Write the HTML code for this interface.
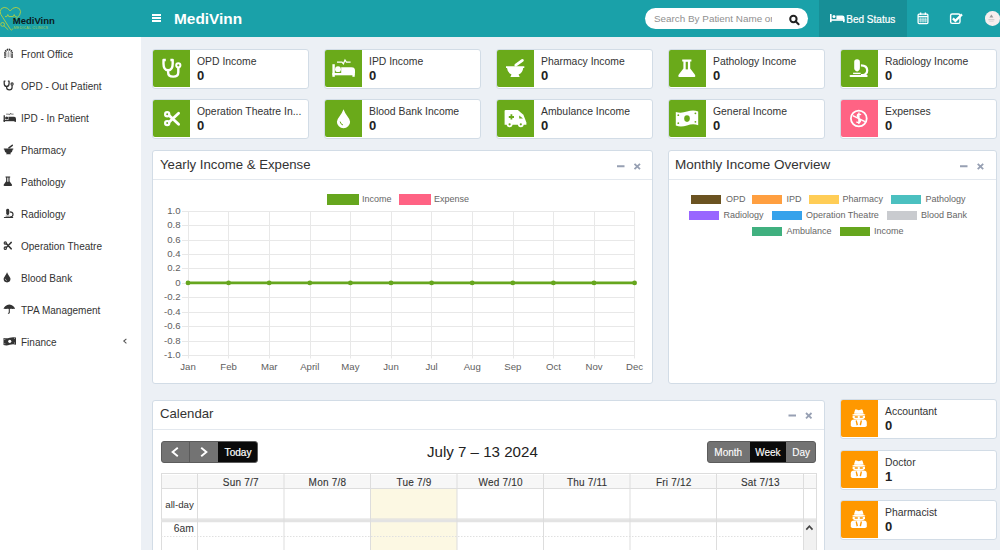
<!DOCTYPE html>
<html><head><meta charset="utf-8">
<style>
*{box-sizing:border-box;margin:0;padding:0}
html,body{width:1000px;height:550px;overflow:hidden}
body{font-family:"Liberation Sans",sans-serif;background:#ecf0f5;position:relative;color:#333}
.abs{position:absolute}
svg{position:absolute;overflow:visible}
#hdr{position:absolute;left:0;top:0;width:1000px;height:37px;background:#1aa1a9}
#side{position:absolute;left:0;top:37px;width:141px;height:513px;background:#fff}
.nav{position:absolute;left:21px;font-size:10px;color:#333;line-height:12px;white-space:nowrap}
.ib{position:absolute;width:156.5px;height:40px;background:#fff;border:1px solid #d2dce6;border-radius:3px}
.ib .ic{position:absolute;left:0;top:0;width:37px;height:37px;background:#6aaa1a;border-radius:2px 0 0 2px}
.ib .t{position:absolute;left:44px;top:6px;font-size:10.4px;color:#333;white-space:nowrap;line-height:12px}
.ib .v{position:absolute;left:44px;top:18px;font-size:13px;font-weight:bold;color:#222;line-height:15px}
.box{position:absolute;background:#fff;border:1px solid #d2dce6;border-radius:3px}
.box .bh{position:absolute;left:0;right:0;top:0;height:29px;border-bottom:1px solid #e3e8ee}
.box .bt{position:absolute;left:6px;top:6px;font-size:13.2px;color:#333;white-space:nowrap;line-height:16px}
.tool{position:absolute;color:#97a0b3;font-weight:bold}
.lg{position:absolute;font-size:9px;color:#666;white-space:nowrap;line-height:10px}
.sw{position:absolute;width:30px;height:9px}
</style></head><body>
<div id="hdr">
  <div class="abs" style="left:174px;top:10px;font-size:15.4px;font-weight:bold;color:#fff;line-height:17px">MediVinn</div>
  <div class="abs" style="left:152px;top:14px;width:9px;height:2px;background:#fff"></div>
  <div class="abs" style="left:152px;top:17px;width:9px;height:2px;background:#fff"></div>
  <div class="abs" style="left:152px;top:20px;width:9px;height:2px;background:#fff"></div>

  <div class="abs" style="left:819px;top:0;width:87.5px;height:37px;background:#178f97"></div>
  <!-- search -->
  <div class="abs" style="left:644.5px;top:8px;width:163px;height:21px;border-radius:11px;background:#fff"></div>
  <div class="abs" style="left:654px;top:12.6px;width:117.5px;overflow:hidden;font-size:9.9px;color:#8f8f8f;white-space:nowrap;line-height:12px">Search By Patient Name or</div>
  <!-- bed status -->
  <!-- logo -->
  <svg style="left:0;top:0" width="141" height="37" fill="none" stroke="#b5d040" stroke-width="0.9">
   <path d="M10.2 11Q7.6 7.2 4.2 7.4Q0.4 7.8 0.2 11.6Q0.2 14.4 2.6 17.2L10.6 29.6Q11.6 30.6 12.4 29.4L12.8 28.6"/>
   <path d="M10.2 11Q12.8 7.2 16.2 7.4Q20.4 7.8 20.6 11.6Q20.6 15.2 17 17.8L13.4 20.4"/>
   <path d="M5 16.6H6.8L7.8 14.6L8.8 16.6H13.2L14.2 14.6L15.2 16.6H16.6"/>
   <circle cx="2.6" cy="24.4" r="1.9"/>
   <path d="M4 25.8L8.2 29.8"/>
  </svg>
  <div class="abs" style="left:12.8px;top:16.4px;font-size:9.5px;font-weight:bold;color:#0b1a1c;line-height:10px">MediVinn</div>
  <div class="abs" style="left:13.5px;top:26px;font-size:3.6px;color:#a9cb4e;line-height:4px;letter-spacing:0.25px;white-space:nowrap">MEDICAL CLINICS</div>
  <!-- search icon -->
  <svg style="left:0;top:0" width="1000" height="37" fill="none" stroke="#222">
   <circle cx="793.4" cy="19" r="3.2" stroke-width="2"/>
   <path d="M795.6 21.3L798.6 24.2" stroke-width="2" stroke-linecap="round"/>
  </svg>
  <!-- bed icon -->
  <svg style="left:0;top:0" width="1000" height="37" fill="#fff">
   <rect x="830" y="14" width="1.6" height="8.2"/>
   <rect x="830" y="19.2" width="14.5" height="1.6"/>
   <rect x="843" y="19.2" width="1.6" height="3"/>
   <circle cx="834" cy="16.6" r="1.5"/>
   <path d="M836.4 15.4H842.4Q844.5 15.4 844.5 17.4V19.4H836.4Z"/>
  </svg>
  <!-- calendar + check icons -->
  <svg style="left:0;top:0" width="1000" height="37" fill="none" stroke="#fff">
   <rect x="918.1" y="14.2" width="9.8" height="9.4" rx="1" stroke-width="1.3"/>
   <path d="M918.1 16.6H927.9" stroke-width="1.4"/>
   <path d="M920.6 12.4V15M925.4 12.4V15" stroke-width="1.4"/>
   <path d="M920.3 17.6V22.6M922.1 17.6V22.6M923.9 17.6V22.6M925.7 17.6V22.6M918.6 19.2H927.4M918.6 21H927.4" stroke-width="0.6"/>
   <rect x="950.6" y="14" width="9.4" height="9.4" rx="1.6" stroke-width="1.4"/>
   <path d="M952.9 18.4L955.4 20.9L962 14.4" stroke-width="2.2"/>
  </svg>
  <!-- avatar -->
  <div class="abs" style="left:985px;top:11.3px;width:14.6px;height:14.6px;border-radius:50%;background:#f6eeee"></div>
  <svg style="left:0;top:0" width="1000" height="37" fill="#999">
   <path d="M989.4 17.6L991.4 14.4L993.4 17.6Z"/>
   <rect x="988.4" y="19.4" width="6" height="0.8" fill="#bbb"/>
   <rect x="989.2" y="21" width="4.4" height="0.5" fill="#ccc"/>
  </svg>

  <div class="abs" style="left:846.3px;top:14.3px;font-size:10px;color:#fff;white-space:nowrap;line-height:12px;-webkit-text-stroke:0.2px #fff">Bed Status</div>
</div>
<div id="side">
  <div class="nav" style="top:12.4px">Front Office</div>
  <div class="nav" style="top:44.4px">OPD - Out Patient</div>
  <div class="nav" style="top:76.4px">IPD - In Patient</div>
  <div class="nav" style="top:108.4px">Pharmacy</div>
  <div class="nav" style="top:140.4px">Pathology</div>
  <div class="nav" style="top:172.4px">Radiology</div>
  <div class="nav" style="top:204.4px">Operation Theatre</div>
  <div class="nav" style="top:236.4px">Blood Bank</div>
  <div class="nav" style="top:268.4px">TPA Management</div>
  <div class="nav" style="top:300.4px">Finance</div>
  <svg style="left:0;top:0" width="141" height="513"><path d="M126.4 301.8L123.8 304.1L126.4 306.4" stroke="#555" stroke-width="1.1" fill="none"/></svg>
</div>

<div class="ib" style="left:152px;top:49px"><div class="ic"></div><div class="t">OPD Income</div><div class="v">0</div></div>
<div class="ib" style="left:324px;top:49px"><div class="ic"></div><div class="t">IPD Income</div><div class="v">0</div></div>
<div class="ib" style="left:496px;top:49px"><div class="ic"></div><div class="t">Pharmacy Income</div><div class="v">0</div></div>
<div class="ib" style="left:668px;top:49px"><div class="ic"></div><div class="t">Pathology Income</div><div class="v">0</div></div>
<div class="ib" style="left:840px;top:49px"><div class="ic"></div><div class="t">Radiology Income</div><div class="v">0</div></div>
<div class="ib" style="left:152px;top:99px"><div class="ic"></div><div class="t">Operation Theatre In...</div><div class="v">0</div></div>
<div class="ib" style="left:324px;top:99px"><div class="ic"></div><div class="t">Blood Bank Income</div><div class="v">0</div></div>
<div class="ib" style="left:496px;top:99px"><div class="ic"></div><div class="t">Ambulance Income</div><div class="v">0</div></div>
<div class="ib" style="left:668px;top:99px"><div class="ic"></div><div class="t">General Income</div><div class="v">0</div></div>
<div class="ib" style="left:840px;top:99px"><div class="ic" style="background:#ff6384"></div><div class="t">Expenses</div><div class="v">0</div></div>


<!-- info box icons -->
<svg style="left:0;top:0" width="1000" height="550">
<g transform="translate(153,49)"><svg x="9.2" y="9.6" width="18.4" height="19.4" viewBox="9.2 9.6 18.4 19.4" preserveAspectRatio="none" style="position:static;overflow:visible;color:#fff;--k:#6aaa1a">
  <path d="M12.8 11H10.5V14.8Q10.5 21.2 15.1 21.2Q19.7 21.2 19.7 14.8V11H17.4" fill="none" stroke="currentColor" stroke-width="2.4" stroke-linejoin="round"/>
  <path d="M15.1 21V23.2Q15.1 27.6 20.2 27.6Q25.3 27.6 25.3 23.2V18.4" fill="none" stroke="currentColor" stroke-width="2.4"/>
  <circle cx="25.3" cy="16.3" r="2.1" fill="none" stroke="currentColor" stroke-width="2"/>
</svg></g>
<g transform="translate(324,49)"><svg x="8.4" y="10.4" width="22.6" height="17.4" viewBox="8.4 10.4 22.6 17.4" preserveAspectRatio="none" style="position:static;overflow:visible;color:#fff;--k:#6aaa1a">
  <rect x="8.4" y="15.2" width="2.4" height="12.6" fill="currentColor"/>
  <rect x="8.4" y="24" width="22.3" height="2.3" fill="currentColor"/>
  <rect x="28.4" y="24" width="2.3" height="3.8" fill="currentColor"/>
  <circle cx="14" cy="20.2" r="2.9" fill="currentColor"/>
  <path d="M17.2 18.2H27.5Q31 18.2 31 21.6V24H17.2Z" fill="currentColor"/>
  <path d="M13 13.1H18L19.4 14.8L21 11L22.4 13.1H26.6" stroke="currentColor" stroke-width="1.2" fill="none"/>
</svg></g>
<g transform="translate(496,49)"><svg x="10.0" y="10.0" width="18.3" height="18.0" viewBox="10 10 18.3 18" preserveAspectRatio="none" style="position:static;overflow:visible;color:#fff;--k:#6aaa1a">
  <path d="M10 17.2H28.3V19H27.2Q26.8 23.8 22.6 25.6L23.7 27.9H14.4L15.5 25.6Q11.4 23.8 11 19H10Z" fill="currentColor"/>
  <path d="M19.8 16.2L26.4 11.4" stroke="currentColor" stroke-width="2.8" stroke-linecap="round"/>
</svg></g>
<g transform="translate(668,49)"><svg x="10.8" y="10.6" width="16.6" height="17.4" viewBox="10.8 10.6 16.6 17.4" preserveAspectRatio="none" style="position:static;overflow:visible;color:#fff;--k:#6aaa1a">
  <path d="M14.2 10.6H23.4V12.4H22.2V19.4L26.8 25.4Q28.4 28 25.4 28H12.2Q9.2 28 10.8 25.4L15.4 19.4V12.4H14.2Z" fill="currentColor"/>
  <rect x="17.7" y="12.8" width="2.2" height="7.6" style="fill:var(--k)"/>
</svg></g>
<g transform="translate(840,49)"><svg x="9.6" y="10.3" width="18.7" height="17.7" viewBox="9.6 10.3 18.7 17.7" preserveAspectRatio="none" style="position:static;overflow:visible;color:#fff;--k:#6aaa1a">
  <rect x="14.2" y="10.3" width="5.7" height="11.6" rx="2.8" fill="currentColor"/>
  <path d="M14.6 20.5H19.5L17.05 22.7Z" fill="currentColor"/>
  <rect x="13.1" y="23.7" width="7.5" height="1.4" fill="currentColor"/>
  <rect x="9.6" y="26.1" width="18.1" height="1.9" rx="0.9" fill="currentColor"/>
  <path d="M20.9 16.4Q27.2 16.4 27.2 21.4Q27.2 26.1 21 26.1" stroke="currentColor" stroke-width="2.2" fill="none"/>
</svg></g>
<g transform="translate(153,99)"><svg x="11.0" y="11.9" width="16.0" height="15.4" viewBox="11 11.9 16 15.4" preserveAspectRatio="none" style="position:static;overflow:visible;color:#fff;--k:#6aaa1a">
  <circle cx="14.2" cy="15.2" r="2.1" fill="none" stroke="currentColor" stroke-width="2.2"/>
  <circle cx="14.2" cy="24.1" r="2.1" fill="none" stroke="currentColor" stroke-width="2.2"/>
  <path d="M16.2 23L25.6 14.2M16.2 16.4L25.6 25.2" stroke="currentColor" stroke-width="2.8" stroke-linecap="round"/>
</svg></g>
<g transform="translate(325,99)"><svg x="11.9" y="10.3" width="13.2" height="19.0" viewBox="11.9 10.3 13.2 19" preserveAspectRatio="none" style="position:static;overflow:visible;color:#fff;--k:#6aaa1a">
  <path d="M18.5 10.3Q19.6 13.5 22.4 17.2Q25.1 20.6 25.1 22.7A6.6 6.6 0 0 1 11.9 22.7Q11.9 20.6 14.6 17.2Q17.4 13.5 18.5 10.3Z" fill="currentColor"/>
  <path d="M15.2 22.6Q15.4 25.2 18 26" style="stroke:var(--k)" stroke-width="1" fill="none"/>
</svg></g>
<g transform="translate(497,99)"><svg x="7.6" y="10.9" width="21.8" height="17.3" viewBox="7.6 10.9 21.8 17.3" preserveAspectRatio="none" style="position:static;overflow:visible;color:#fff;--k:#6aaa1a">
  <path d="M7.6 12Q7.6 10.9 8.7 10.9H20.8L26.4 15.7L29.4 23.4V25.8H7.6Z" fill="currentColor"/>
  <circle cx="12.6" cy="25.3" r="2.9" fill="currentColor"/>
  <circle cx="23.8" cy="25.3" r="2.9" fill="currentColor"/>
  <circle cx="12.6" cy="25.3" r="1.1" style="fill:var(--k)"/>
  <circle cx="23.8" cy="25.3" r="1.1" style="fill:var(--k)"/>
  <path d="M14.4 15.3V20.6M11.8 18H17" style="stroke:var(--k)" stroke-width="1.8"/>
  <path d="M22.2 16.6L26 19.6H22.2Z" style="fill:var(--k)"/>
</svg></g>
<g transform="translate(669,99)"><svg x="6.8" y="11.0" width="22.4" height="17.6" viewBox="6.8 11 22.4 17.6" preserveAspectRatio="none" style="position:static;overflow:visible;color:#fff;--k:#6aaa1a">
  <path d="M6.8 13Q12 14.6 18 12.6Q24 10.4 29.2 12.4V26.2Q24 24.4 18 26.4Q12 28.6 6.8 26.6Z" fill="currentColor"/>
  <ellipse cx="18" cy="19.6" rx="2.8" ry="3.3" style="fill:var(--k)"/>
  <circle cx="9.3" cy="16.2" r="0.9" style="fill:var(--k)"/>
  <circle cx="26.4" cy="14.3" r="0.9" style="fill:var(--k)"/>
  <circle cx="9.3" cy="24.2" r="0.9" style="fill:var(--k)"/>
  <circle cx="26.4" cy="22.8" r="0.9" style="fill:var(--k)"/>
</svg></g>
<g transform="translate(841,99)"><svg x="9.0" y="10.7" width="17.6" height="17.6" viewBox="9 10.7 17.6 17.6" preserveAspectRatio="none" style="position:static;overflow:visible;color:#fff;--k:#ff6384">
  <circle cx="17.8" cy="19.5" r="7.9" fill="none" stroke="currentColor" stroke-width="1.8"/>
  <path d="M11.8 16.6L24 22.6" stroke="currentColor" stroke-width="1.6"/>
  <path d="M20 15.8Q18.9 14.8 17.6 15.2Q15.6 15.9 16.9 17.8L18.9 20.6Q20.2 22.7 18.1 23.5Q16.6 23.9 15.4 22.8M17.9 13.6V24.9" stroke="currentColor" stroke-width="1.4" fill="none"/>
</svg></g>
</svg>
<!-- side icons -->
<svg style="left:0;top:0" width="141" height="550">
<svg x="3.8" y="48.7" width="9.5" height="9.5" viewBox="0 0 10 10" preserveAspectRatio="none" style="position:static;overflow:visible;color:#333;--k:#fff">
  <path d="M1.3 9.6V4.6A3.7 3.7 0 0 1 8.7 4.6V9.6" fill="none" stroke="currentColor" stroke-width="2" stroke-dasharray="1.5 0.7"/>
  <path d="M5 2.6V9M3.3 3.8V9M6.7 3.8V9" stroke="currentColor" stroke-width="0.8" opacity="0.55"/>
</svg>
<svg x="3.5" y="80.5" width="9.8" height="10" viewBox="9.2 9.6 18.4 19.4" preserveAspectRatio="none" style="position:static;overflow:visible;color:#333;--k:#fff">
  <path d="M12.8 11H10.5V14.8Q10.5 21.2 15.1 21.2Q19.7 21.2 19.7 14.8V11H17.4" fill="none" stroke="currentColor" stroke-width="2.4" stroke-linejoin="round"/>
  <path d="M15.1 21V23.2Q15.1 27.6 20.2 27.6Q25.3 27.6 25.3 23.2V18.4" fill="none" stroke="currentColor" stroke-width="2.4"/>
  <circle cx="25.3" cy="16.3" r="2.1" fill="none" stroke="currentColor" stroke-width="2"/>
</svg>
<svg x="3.6" y="112.7" width="12.4" height="9.3" viewBox="8.4 10.4 22.6 17.4" preserveAspectRatio="none" style="position:static;overflow:visible;color:#333;--k:#fff">
  <rect x="8.4" y="15.2" width="2.4" height="12.6" fill="currentColor"/>
  <rect x="8.4" y="24" width="22.3" height="2.3" fill="currentColor"/>
  <rect x="28.4" y="24" width="2.3" height="3.8" fill="currentColor"/>
  <circle cx="14" cy="20.2" r="2.9" fill="currentColor"/>
  <path d="M17.2 18.2H27.5Q31 18.2 31 21.6V24H17.2Z" fill="currentColor"/>
  <path d="M13 13.1H18L19.4 14.8L21 11L22.4 13.1H26.6" stroke="currentColor" stroke-width="1.2" fill="none"/>
</svg>
<svg x="3.8" y="144.5" width="9.5" height="9.9" viewBox="10 10 18.3 18" preserveAspectRatio="none" style="position:static;overflow:visible;color:#333;--k:#fff">
  <path d="M10 17.2H28.3V19H27.2Q26.8 23.8 22.6 25.6L23.7 27.9H14.4L15.5 25.6Q11.4 23.8 11 19H10Z" fill="currentColor"/>
  <path d="M19.8 16.2L26.4 11.4" stroke="currentColor" stroke-width="2.8" stroke-linecap="round"/>
</svg>
<svg x="3.8" y="176.4" width="8.4" height="9.6" viewBox="10.8 10.6 16.6 17.4" preserveAspectRatio="none" style="position:static;overflow:visible;color:#333;--k:#fff">
  <path d="M14.2 10.6H23.4V12.4H22.2V19.4L26.8 25.4Q28.4 28 25.4 28H12.2Q9.2 28 10.8 25.4L15.4 19.4V12.4H14.2Z" fill="currentColor"/>
  <rect x="17.7" y="12.8" width="2.2" height="7.6" style="fill:var(--k)"/>
</svg>
<svg x="3.8" y="208.7" width="9.8" height="9.3" viewBox="9.6 10.3 18.7 17.7" preserveAspectRatio="none" style="position:static;overflow:visible;color:#333;--k:#fff">
  <rect x="14.2" y="10.3" width="5.7" height="11.6" rx="2.8" fill="currentColor"/>
  <path d="M14.6 20.5H19.5L17.05 22.7Z" fill="currentColor"/>
  <rect x="13.1" y="23.7" width="7.5" height="1.4" fill="currentColor"/>
  <rect x="9.6" y="26.1" width="18.1" height="1.9" rx="0.9" fill="currentColor"/>
  <path d="M20.9 16.4Q27.2 16.4 27.2 21.4Q27.2 26.1 21 26.1" stroke="currentColor" stroke-width="2.2" fill="none"/>
</svg>
<svg x="3.6" y="241.1" width="8.4" height="8.9" viewBox="11 11.9 16 15.4" preserveAspectRatio="none" style="position:static;overflow:visible;color:#333;--k:#fff">
  <circle cx="14.2" cy="15.2" r="2.1" fill="none" stroke="currentColor" stroke-width="2.2"/>
  <circle cx="14.2" cy="24.1" r="2.1" fill="none" stroke="currentColor" stroke-width="2.2"/>
  <path d="M16.2 23L25.6 14.2M16.2 16.4L25.6 25.2" stroke="currentColor" stroke-width="2.8" stroke-linecap="round"/>
</svg>
<svg x="3.6" y="272.2" width="6.9" height="10.2" viewBox="11.9 10.3 13.2 19" preserveAspectRatio="none" style="position:static;overflow:visible;color:#333;--k:#fff">
  <path d="M18.5 10.3Q19.6 13.5 22.4 17.2Q25.1 20.6 25.1 22.7A6.6 6.6 0 0 1 11.9 22.7Q11.9 20.6 14.6 17.2Q17.4 13.5 18.5 10.3Z" fill="currentColor"/>
  <path d="M15.2 22.6Q15.4 25.2 18 26" style="stroke:var(--k)" stroke-width="1" fill="none"/>
</svg>
<svg x="3.5" y="304.2" width="11.6" height="9.8" viewBox="0 0 12 10" preserveAspectRatio="none" style="position:static;overflow:visible;color:#333;--k:#fff">
  <path d="M0 5Q1.2 1.2 6 0.4Q10.8 1.2 12 5Q10.8 4.4 9.6 5Q8.4 4.2 6 4.8Q3.6 4.2 2.4 5Q1.2 4.4 0 5Z" fill="currentColor"/>
  <path d="M6 4.6V8.4Q6 9.4 4.6 9.2" stroke="currentColor" stroke-width="1.1" fill="none"/>
</svg>
<svg x="3.5" y="336.9" width="12.5" height="9.1" viewBox="6.8 11 22.4 17.6" preserveAspectRatio="none" style="position:static;overflow:visible;color:#333;--k:#fff">
  <path d="M6.8 13Q12 14.6 18 12.6Q24 10.4 29.2 12.4V26.2Q24 24.4 18 26.4Q12 28.6 6.8 26.6Z" fill="currentColor"/>
  <ellipse cx="18" cy="19.6" rx="2.8" ry="3.3" style="fill:var(--k)"/>
  <circle cx="9.3" cy="16.2" r="0.9" style="fill:var(--k)"/>
  <circle cx="26.4" cy="14.3" r="0.9" style="fill:var(--k)"/>
  <circle cx="9.3" cy="24.2" r="0.9" style="fill:var(--k)"/>
  <circle cx="26.4" cy="22.8" r="0.9" style="fill:var(--k)"/>
</svg>
</svg>
<!-- Yearly chart box -->
<div class="box" style="left:152px;top:150px;width:501px;height:234px"><div class="bh"><div class="bt" style="left:7px">Yearly Income &amp; Expense</div></div></div>
<div class="sw" style="left:327px;top:194px;width:32px;height:10.5px;background:#66a61e"></div>
<div class="lg" style="left:362px;top:194px">Income</div>
<div class="sw" style="left:399px;top:194px;width:32px;height:10.5px;background:#ff6384"></div>
<div class="lg" style="left:434px;top:194px">Expense</div>

<!--CHART-->
<svg style="left:0;top:0" width="1000" height="550" viewBox="0 0 1000 550">
<path d="M182 211.5H634.6M182 225.5H634.6M182 240.5H634.6M182 254.5H634.6M182 268.5H634.6M182 283.5H634.6M182 297.5H634.6M182 312.5H634.6M182 326.5H634.6M182 341.5H634.6M182 355.5H634.6M188.5 211.5V358.5M228.5 211.5V358.5M269.5 211.5V358.5M310.5 211.5V358.5M350.5 211.5V358.5M391.5 211.5V358.5M431.5 211.5V358.5M472.5 211.5V358.5M513.5 211.5V358.5M553.5 211.5V358.5M594.5 211.5V358.5M634.5 211.5V358.5" stroke="#e8e8e8" stroke-width="1" fill="none"/>
<text x="180.5" y="213.6" text-anchor="end" font-size="9.6" fill="#606060" font-family="Liberation Sans">1.0</text>
<text x="180.5" y="228.1" text-anchor="end" font-size="9.6" fill="#606060" font-family="Liberation Sans">0.8</text>
<text x="180.5" y="242.5" text-anchor="end" font-size="9.6" fill="#606060" font-family="Liberation Sans">0.6</text>
<text x="180.5" y="257.0" text-anchor="end" font-size="9.6" fill="#606060" font-family="Liberation Sans">0.4</text>
<text x="180.5" y="271.4" text-anchor="end" font-size="9.6" fill="#606060" font-family="Liberation Sans">0.2</text>
<text x="180.5" y="285.9" text-anchor="end" font-size="9.6" fill="#606060" font-family="Liberation Sans">0</text>
<text x="180.5" y="300.4" text-anchor="end" font-size="9.6" fill="#606060" font-family="Liberation Sans">-0.2</text>
<text x="180.5" y="314.8" text-anchor="end" font-size="9.6" fill="#606060" font-family="Liberation Sans">-0.4</text>
<text x="180.5" y="329.3" text-anchor="end" font-size="9.6" fill="#606060" font-family="Liberation Sans">-0.6</text>
<text x="180.5" y="343.7" text-anchor="end" font-size="9.6" fill="#606060" font-family="Liberation Sans">-0.8</text>
<text x="180.5" y="358.2" text-anchor="end" font-size="9.6" fill="#606060" font-family="Liberation Sans">-1.0</text>
<text x="188.0" y="370" text-anchor="middle" font-size="9.6" fill="#606060" font-family="Liberation Sans">Jan</text>
<text x="228.6" y="370" text-anchor="middle" font-size="9.6" fill="#606060" font-family="Liberation Sans">Feb</text>
<text x="269.2" y="370" text-anchor="middle" font-size="9.6" fill="#606060" font-family="Liberation Sans">Mar</text>
<text x="309.8" y="370" text-anchor="middle" font-size="9.6" fill="#606060" font-family="Liberation Sans">April</text>
<text x="350.4" y="370" text-anchor="middle" font-size="9.6" fill="#606060" font-family="Liberation Sans">May</text>
<text x="391.0" y="370" text-anchor="middle" font-size="9.6" fill="#606060" font-family="Liberation Sans">Jun</text>
<text x="431.6" y="370" text-anchor="middle" font-size="9.6" fill="#606060" font-family="Liberation Sans">Jul</text>
<text x="472.2" y="370" text-anchor="middle" font-size="9.6" fill="#606060" font-family="Liberation Sans">Aug</text>
<text x="512.8" y="370" text-anchor="middle" font-size="9.6" fill="#606060" font-family="Liberation Sans">Sep</text>
<text x="553.4" y="370" text-anchor="middle" font-size="9.6" fill="#606060" font-family="Liberation Sans">Oct</text>
<text x="594.0" y="370" text-anchor="middle" font-size="9.6" fill="#606060" font-family="Liberation Sans">Nov</text>
<text x="634.6" y="370" text-anchor="middle" font-size="9.6" fill="#606060" font-family="Liberation Sans">Dec</text>
<path d="M188.0 282.9H634.6" stroke="#ff6384" stroke-width="1" fill="none"/>
<path d="M188.0 282.9H634.6" stroke="#66a61e" stroke-width="2.6" fill="none"/>
<circle cx="188.0" cy="282.9" r="2.4" fill="#66a61e"/>
<circle cx="228.6" cy="282.9" r="2.4" fill="#66a61e"/>
<circle cx="269.2" cy="282.9" r="2.4" fill="#66a61e"/>
<circle cx="309.8" cy="282.9" r="2.4" fill="#66a61e"/>
<circle cx="350.4" cy="282.9" r="2.4" fill="#66a61e"/>
<circle cx="391.0" cy="282.9" r="2.4" fill="#66a61e"/>
<circle cx="431.6" cy="282.9" r="2.4" fill="#66a61e"/>
<circle cx="472.2" cy="282.9" r="2.4" fill="#66a61e"/>
<circle cx="512.8" cy="282.9" r="2.4" fill="#66a61e"/>
<circle cx="553.4" cy="282.9" r="2.4" fill="#66a61e"/>
<circle cx="594.0" cy="282.9" r="2.4" fill="#66a61e"/>
<circle cx="634.6" cy="282.9" r="2.4" fill="#66a61e"/>
</svg>
<!-- Monthly box -->
<div class="box" style="left:668px;top:150px;width:328.5px;height:234px"><div class="bh"><div class="bt" style="font-size:13.5px;left:6px">Monthly Income Overview</div></div></div>
<div class="sw" style="left:691px;top:195px;background:#6b5321"></div><div class="lg" style="left:726px;top:194px">OPD</div>
<div class="sw" style="left:752px;top:195px;background:#ff9f40"></div><div class="lg" style="left:786.5px;top:194px">IPD</div>
<div class="sw" style="left:808.5px;top:195px;background:#ffcd56"></div><div class="lg" style="left:842.5px;top:194px">Pharmacy</div>
<div class="sw" style="left:891px;top:195px;background:#4bc0c0"></div><div class="lg" style="left:925.5px;top:194px">Pathology</div>
<div class="sw" style="left:689px;top:211px;background:#9966ff"></div><div class="lg" style="left:723.5px;top:210px">Radiology</div>
<div class="sw" style="left:771.5px;top:211px;background:#36a2eb"></div><div class="lg" style="left:806px;top:210px">Operation Theatre</div>
<div class="sw" style="left:887px;top:211px;background:#c9cbcf"></div><div class="lg" style="left:921px;top:210px">Blood Bank</div>
<div class="sw" style="left:752px;top:227px;background:#40b07f"></div><div class="lg" style="left:786.5px;top:226px">Ambulance</div>
<div class="sw" style="left:840px;top:227px;background:#66a61e"></div><div class="lg" style="left:874px;top:226px">Income</div>

<!-- Calendar box -->
<div class="box" style="left:152px;top:400px;width:672.5px;height:170px"><div class="bh"><div class="bt" style="top:5px;left:7px">Calendar</div></div></div>


<!-- calendar content -->
<div class="abs" style="left:160.5px;top:440.6px;width:97px;height:22.2px;border-radius:3px;background:#737373;border:1px solid #5c5c5c;overflow:hidden">
  <div class="abs" style="left:27px;top:0;width:1.5px;height:20px;background:#5a5a5a"></div>
  <div class="abs" style="left:56.8px;top:-1px;width:40px;height:22px;background:#0a0a0a"></div>
</div>
<svg style="left:0;top:0" width="1000" height="550"><path d="M177.8 447.8L172.6 452L177.8 456.3M201.2 447.8L206.4 452L201.2 456.3" stroke="#fff" stroke-width="1.9" fill="none"/></svg>
<div class="abs" style="left:224.6px;top:446.6px;font-size:10.1px;color:#fff;line-height:12px;-webkit-text-stroke:0.2px #fff">Today</div>
<div class="abs" style="left:427px;top:443px;font-size:15.1px;color:#222;line-height:17px;white-space:nowrap">July 7 &#8211; 13 2024</div>
<div class="abs" style="left:707.4px;top:440.7px;width:108.7px;height:22.2px;border-radius:3px;background:#737373;border:1px solid #5c5c5c;overflow:hidden">
  <div class="abs" style="left:41.6px;top:-1px;width:36.1px;height:22px;background:#0a0a0a"></div>
</div>
<div class="abs" style="left:714.3px;top:447.2px;font-size:10px;color:#fff;line-height:12px;-webkit-text-stroke:0.12px #fff">Month</div>
<div class="abs" style="left:755.2px;top:447.2px;font-size:10px;color:#fff;line-height:12px;-webkit-text-stroke:0.12px #fff">Week</div>
<div class="abs" style="left:792.2px;top:447.2px;font-size:10px;color:#fff;line-height:12px;-webkit-text-stroke:0.12px #fff">Day</div>
<!-- grid -->
<div class="abs" style="left:160.5px;top:473px;width:656px;height:80px;border:1px solid #ddd;border-bottom:none;background:#fff"></div>
<div class="abs" style="left:161.5px;top:474.5px;width:654px;height:14px;background:#f7f7f7"></div>
<div class="abs" style="left:370.6px;top:488.5px;width:86px;height:62px;background:#fcf8e3"></div>
<div class="abs" style="left:803.3px;top:521.5px;width:12.8px;height:30px;background:#f1f1f1"></div>
<svg style="left:0;top:0" width="1000" height="550">
<path d="M161 488.5H816M161 519H816" stroke="#ddd" stroke-width="1" fill="none"/><path d="M161 536.5H803" stroke="#e0e0e0" stroke-width="1" stroke-dasharray="1.5 1.5" fill="none"/>
<path d="M161 520.8H816" stroke="#e3e3e3" stroke-width="3" fill="none"/>
<path d="M197.5 474V550M284 474V550M370.5 474V550M457 474V550M543.5 474V550M630 474V550M716.5 474V550M803.5 474V550" stroke="#ddd" stroke-width="1" fill="none"/>
<path d="M806.3 529.6L809.4 526.2L812.5 529.6" stroke="#444" stroke-width="1.6" fill="none"/>
</svg>
<div class="abs" style="left:197.5px;top:476.5px;width:86.6px;text-align:center;font-size:10px;letter-spacing:0.2px;color:#333;line-height:12px;-webkit-text-stroke:0.1px #333">Sun 7/7</div>
<div class="abs" style="left:284.1px;top:476.5px;width:86.6px;text-align:center;font-size:10px;letter-spacing:0.2px;color:#333;line-height:12px;-webkit-text-stroke:0.1px #333">Mon 7/8</div>
<div class="abs" style="left:370.7px;top:476.5px;width:86.6px;text-align:center;font-size:10px;letter-spacing:0.2px;color:#333;line-height:12px;-webkit-text-stroke:0.1px #333">Tue 7/9</div>
<div class="abs" style="left:457.3px;top:476.5px;width:86.6px;text-align:center;font-size:10px;letter-spacing:0.2px;color:#333;line-height:12px;-webkit-text-stroke:0.1px #333">Wed 7/10</div>
<div class="abs" style="left:543.9px;top:476.5px;width:86.6px;text-align:center;font-size:10px;letter-spacing:0.2px;color:#333;line-height:12px;-webkit-text-stroke:0.1px #333">Thu 7/11</div>
<div class="abs" style="left:630.5px;top:476.5px;width:86.6px;text-align:center;font-size:10px;letter-spacing:0.2px;color:#333;line-height:12px;-webkit-text-stroke:0.1px #333">Fri 7/12</div>
<div class="abs" style="left:717.1px;top:476.5px;width:86.6px;text-align:center;font-size:10px;letter-spacing:0.2px;color:#333;line-height:12px;-webkit-text-stroke:0.1px #333">Sat 7/13</div>
<div class="abs" style="left:150px;top:498.5px;width:43.8px;text-align:right;font-size:9.7px;color:#333;line-height:12px">all-day</div>
<div class="abs" style="left:150px;top:522.5px;width:43.8px;text-align:right;font-size:10.3px;color:#333;line-height:12px">6am</div>

<!-- user boxes -->
<div class="ib" style="left:840px;top:399px"><div class="ic" style="background:#ff9800"></div><div class="t">Accountant</div><div class="v">0</div></div>
<div class="ib" style="left:840px;top:450px"><div class="ic" style="background:#ff9800"></div><div class="t">Doctor</div><div class="v">1</div></div>
<div class="ib" style="left:840px;top:500px"><div class="ic" style="background:#ff9800"></div><div class="t">Pharmacist</div><div class="v">0</div></div>


<!-- tools -->
<svg style="left:0;top:0" width="1000" height="550" fill="none" stroke="#97a0b3">
 <path d="M617 166.3H624.5M960 166.3H967.5M788.5 415.5H796" stroke-width="2"/>
 <path d="M634.5 163.8L640 169.2M640 163.8L634.5 169.2M977.7 163.8L983.2 169.2M983.2 163.8L977.7 169.2M806 413L811.5 418.4M811.5 413L806 418.4" stroke-width="1.8"/>
</svg>
<!-- user secret icons -->
<svg style="left:0;top:0" width="1000" height="550" fill="#fff">
 <g id="us" transform="translate(840.2,399)">
  <path d="M13.8 14.4L14.9 10.8Q15.3 10 16.3 10.4L18.6 11.2L20.9 10.4Q21.9 10 22.3 10.8L23.4 14.4Z"/>
  <path d="M11.6 15.4Q18.6 13.2 25.6 15.4Q18.6 17.4 11.6 15.4Z"/>
  <path d="M12.4 16.4H24.8V18.2Q24.4 20.6 18.6 20.8Q12.8 20.6 12.4 18.2Z"/>
  <path d="M10.6 26.2V23.6Q10.6 20.6 14 20.6H23.2Q26.6 20.6 26.6 23.6V26.2Q26.6 28 24.8 28H12.4Q10.6 28 10.6 26.2Z"/>
  <path d="M14.6 17.2H17.6V18.8H14.6ZM19.6 17.2H22.6V18.8H19.6Z" fill="#ff9800"/>
  <path d="M16.6 21.2L17.8 25.8L16.4 26.4L15.4 21.8ZM20.6 21.2L19.4 25.8L20.8 26.4L21.8 21.8Z" fill="#ff9800"/>
 </g>
 <use href="#us" transform="translate(0,51)"/>
 <use href="#us" transform="translate(0,101)"/>
</svg>
</body></html>
